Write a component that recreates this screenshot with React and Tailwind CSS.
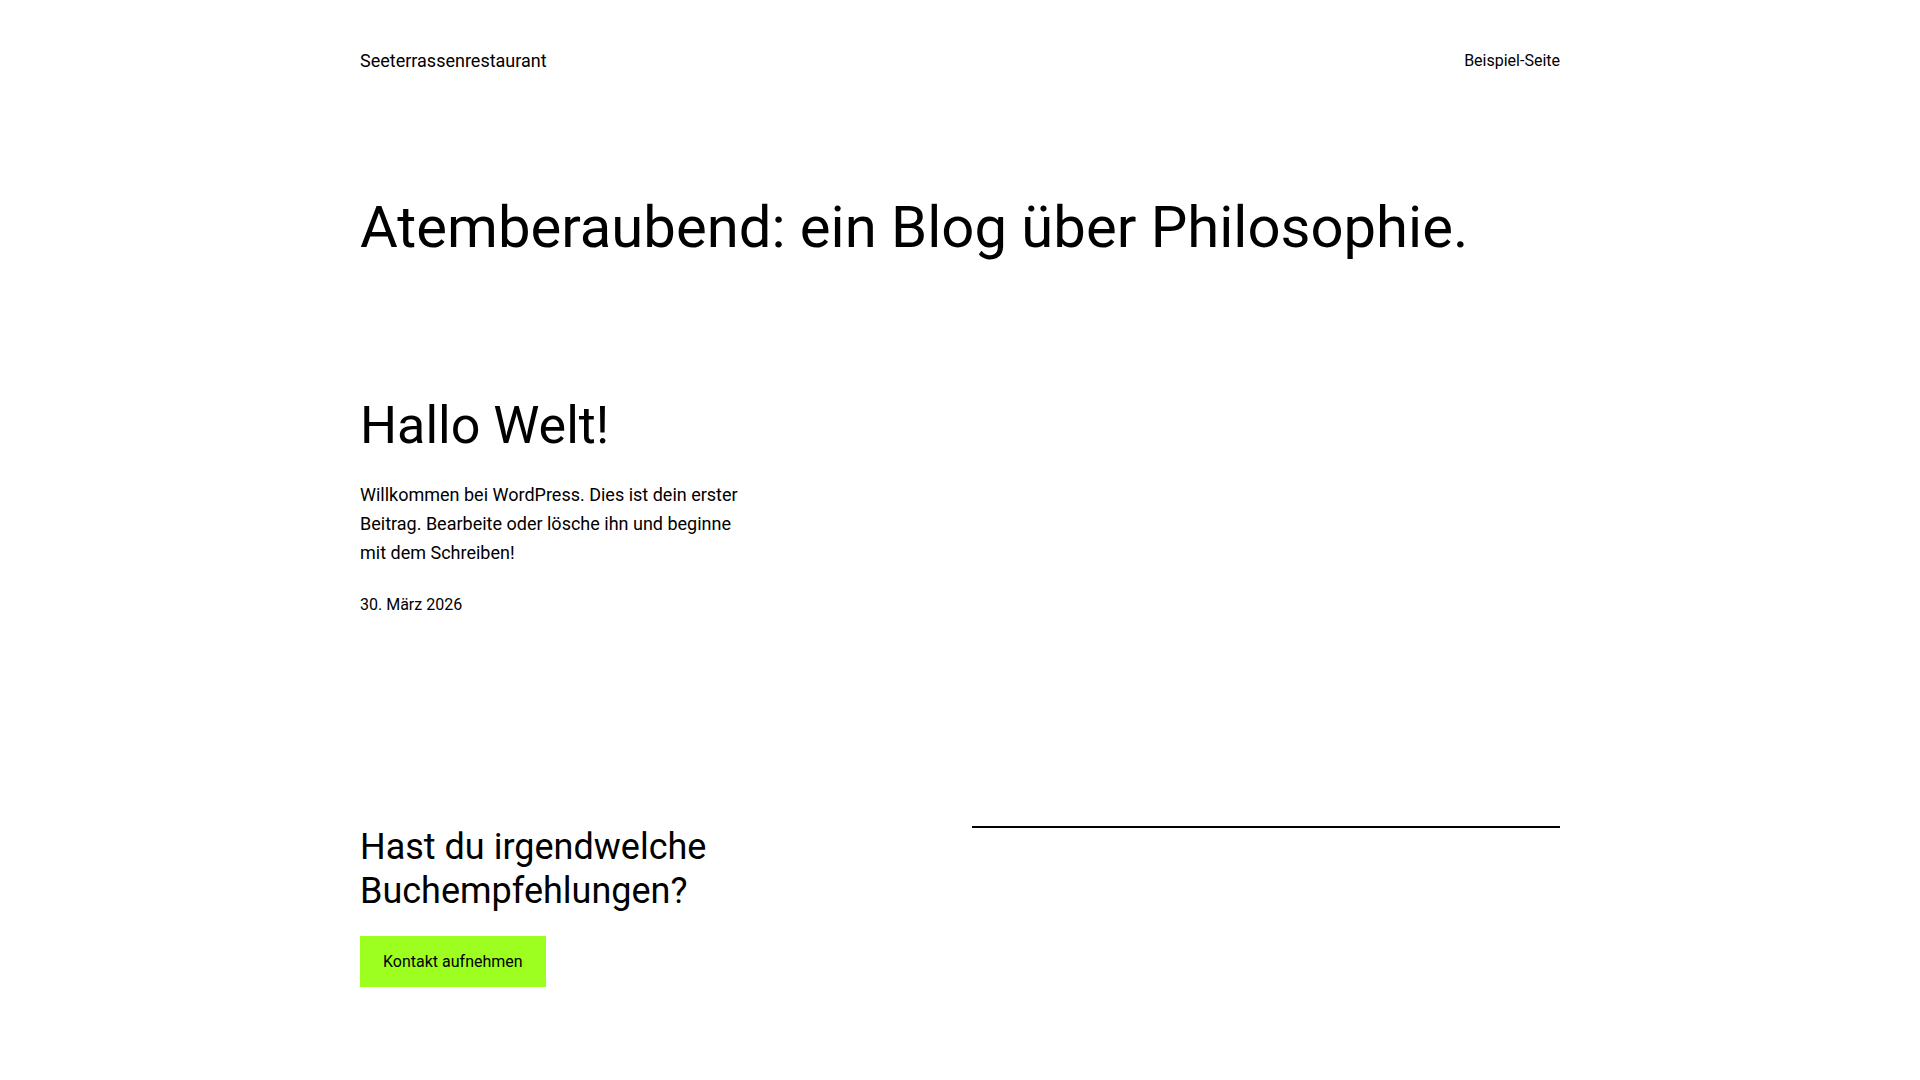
export default function App() {
  return (
    <div className="min-h-screen bg-white text-black font-['Roboto',sans-serif]">
      <div className="mx-auto w-[1200px]">
        <header className="flex h-[73px] items-end justify-between">
          <a className="text-[18px] leading-[24px]">Seeterrassenrestaurant</a>
          <nav className="text-[16px] leading-[24px]">Beispiel-Seite</nav>
        </header>
        <h1 className="mt-[120px] text-[58px] leading-[1.2] font-normal">
          Atemberaubend: ein Blog über Philosophie.
        </h1>
        <div className="mt-[132px] grid grid-cols-3 gap-6">
          <article>
            <h2 className="text-[52px] leading-[1.2] font-normal">Hallo Welt!</h2>
            <p className="mt-[24.5px] text-[18px] leading-[28.8px]">
              Willkommen bei WordPress. Dies ist dein erster Beitrag. Bearbeite oder lösche ihn und beginne mit dem Schreiben!
            </p>
            <div className="mt-[24.5px] text-[16px] leading-[1.6]">30. März 2026</div>
          </article>
        </div>
        <div className="mt-[208.5px] grid grid-cols-2 gap-6">
          <div>
            <h2 className="text-[36px] leading-[1.2] font-normal">
              Hast du irgendwelche
              <br />
              Buchempfehlungen?
            </h2>
            <button className="mt-[23.5px] bg-[#9dff20] px-[23px] py-[12.67px] text-[16px] leading-[25.6px]">
              Kontakt aufnehmen
            </button>
          </div>
          <div>
            <div className="h-[2px] bg-black" />
          </div>
        </div>
      </div>
    </div>
  );
}
